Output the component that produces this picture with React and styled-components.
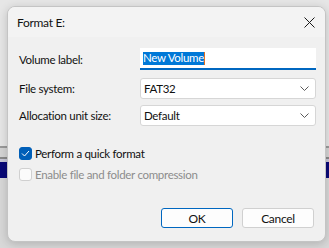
import styled, { createGlobalStyle } from "styled-components";

const Global = createGlobalStyle`
  html, body {
    margin: 0;
    padding: 0;
  }
  body {
    width: 329px;
    height: 248px;
    overflow: hidden;
    font-family: "Segoe UI", Lato, "Noto Sans", sans-serif;
    font-size: 11.5px;
    letter-spacing: -0.3px;
    background:
      linear-gradient(to bottom,
        #e6e6e6 0px, #e6e6e6 146px,
        #9a9a9a 146px, #9a9a9a 148px,
        #d4d4d4 148px, #d4d4d4 157px,
        #8a8a8a 157px, #8a8a8a 159px,
        #c8c8d8 159px, #c8c8d8 162px,
        #0a0a78 162px, #0a0a78 178px,
        #d8d8d8 178px, #d8d8d8 248px);
  }
`;

const Screen = styled.div`
  padding: 6px 3px 6px 7px;
`;

const Dialog = styled.div`
  width: 317px;
  height: 234px;
  background: #f0f0f0;
  border: 1px solid #c4c4c4;
  border-radius: 8px;
  box-shadow: 0 2px 10px rgba(0, 0, 0, 0.18);
  display: flex;
  flex-direction: column;
  overflow: hidden;
`;

const TitleBar = styled.div`
  height: 30px;
  padding: 0 9px 0 9px;
  display: flex;
  align-items: center;
  justify-content: space-between;
  background: #f3f3f3;
  font-size: 12px;
  color: #111;
`;

const Close = styled.div`
  width: 12px;
  height: 12px;
  margin-right: 1px;
  display: flex;
  align-items: center;
  justify-content: center;
`;

const Body = styled.div`
  flex: 1;
  padding: 11px 10px 0 11px;
  display: flex;
  flex-direction: column;
`;

const Row = styled.div`
  display: grid;
  grid-template-columns: 121px 176px;
  align-items: center;
  margin-bottom: ${(p) => p.$gap || 0}px;
`;

const Label = styled.div`
  color: #111;
`;

const TextBox = styled.div`
  height: 20px;
  background: #fff;
  border-bottom: 2px solid #0067c0;
  display: flex;
  align-items: center;
  padding-left: 3px;
`;

const Selected = styled.span`
  background: #0078d7;
  color: #fff;
  line-height: 12px;
  padding: 0 0 1px 0;
  border-right: 1px solid #e07020;
`;

const Select = styled.div`
  height: 19px;
  background: #fff;
  border: 1px solid #d6d6d6;
  border-radius: 3px;
  display: flex;
  align-items: center;
  justify-content: space-between;
  padding: 0 6px 0 3px;
  color: #111;
`;

const Check = styled.div`
  height: 13px;
  display: flex;
  align-items: center;
  gap: 3px;
  color: ${(p) => (p.$disabled ? "#8c8c8c" : "#111")};
  margin-bottom: ${(p) => p.$gap || 0}px;
`;

const Box = styled.div`
  width: 13px;
  height: 13px;
  box-sizing: border-box;
  border-radius: 3px;
  display: flex;
  align-items: center;
  justify-content: center;
  background: ${(p) => (p.$on ? "#005fb8" : "#fbfbfb")};
  border: 1px solid ${(p) => (p.$on ? "#005fb8" : "#d0d0d0")};
`;

const Footer = styled.div`
  margin-top: auto;
  padding: 0 1px 13px 0;
  display: flex;
  justify-content: flex-end;
  gap: 9px;
`;

const Button = styled.div`
  width: 72px;
  height: 20px;
  box-sizing: border-box;
  border-radius: 3px;
  background: #fdfdfd;
  border: 1px solid ${(p) => (p.$primary ? "#0067c0" : "#d0d0d0")};
  display: flex;
  align-items: center;
  justify-content: center;
  font-size: 12px;
  color: #111;
`;

const Chevron = () => (
  <svg width="9" height="5" viewBox="0 0 9 5">
    <path d="M0.5 0.5 L4.5 4.5 L8.5 0.5" fill="none" stroke="#5a5a5a" strokeWidth="1" />
  </svg>
);

export default function App() {
  return (
    <>
      <Global />
      <Screen>
        <Dialog>
          <TitleBar>
            <span>Format E:</span>
            <Close>
              <svg width="11" height="11" viewBox="0 0 11 11">
                <path d="M0.5 0.5 L10.5 10.5 M10.5 0.5 L0.5 10.5" stroke="#1a1a1a" strokeWidth="1" />
              </svg>
            </Close>
          </TitleBar>
          <Body>
            <Row $gap={8}>
              <Label>Volume label:</Label>
              <TextBox>
                <Selected>New Volume</Selected>
              </TextBox>
            </Row>
            <Row $gap={6}>
              <Label>File system:</Label>
              <Select>
                <span>FAT32</span>
                <Chevron />
              </Select>
            </Row>
            <Row $gap={21}>
              <Label>Allocation unit size:</Label>
              <Select>
                <span>Default</span>
                <Chevron />
              </Select>
            </Row>
            <Check $gap={8}>
              <Box $on>
                <svg width="9" height="7" viewBox="0 0 9 7">
                  <path d="M1 3.5 L3.5 6 L8 1" fill="none" stroke="#fff" strokeWidth="1" />
                </svg>
              </Box>
              <span>Perform a quick format</span>
            </Check>
            <Check $disabled>
              <Box />
              <span>Enable file and folder compression</span>
            </Check>
            <Footer>
              <Button $primary>OK</Button>
              <Button>Cancel</Button>
            </Footer>
          </Body>
        </Dialog>
      </Screen>
    </>
  );
}
